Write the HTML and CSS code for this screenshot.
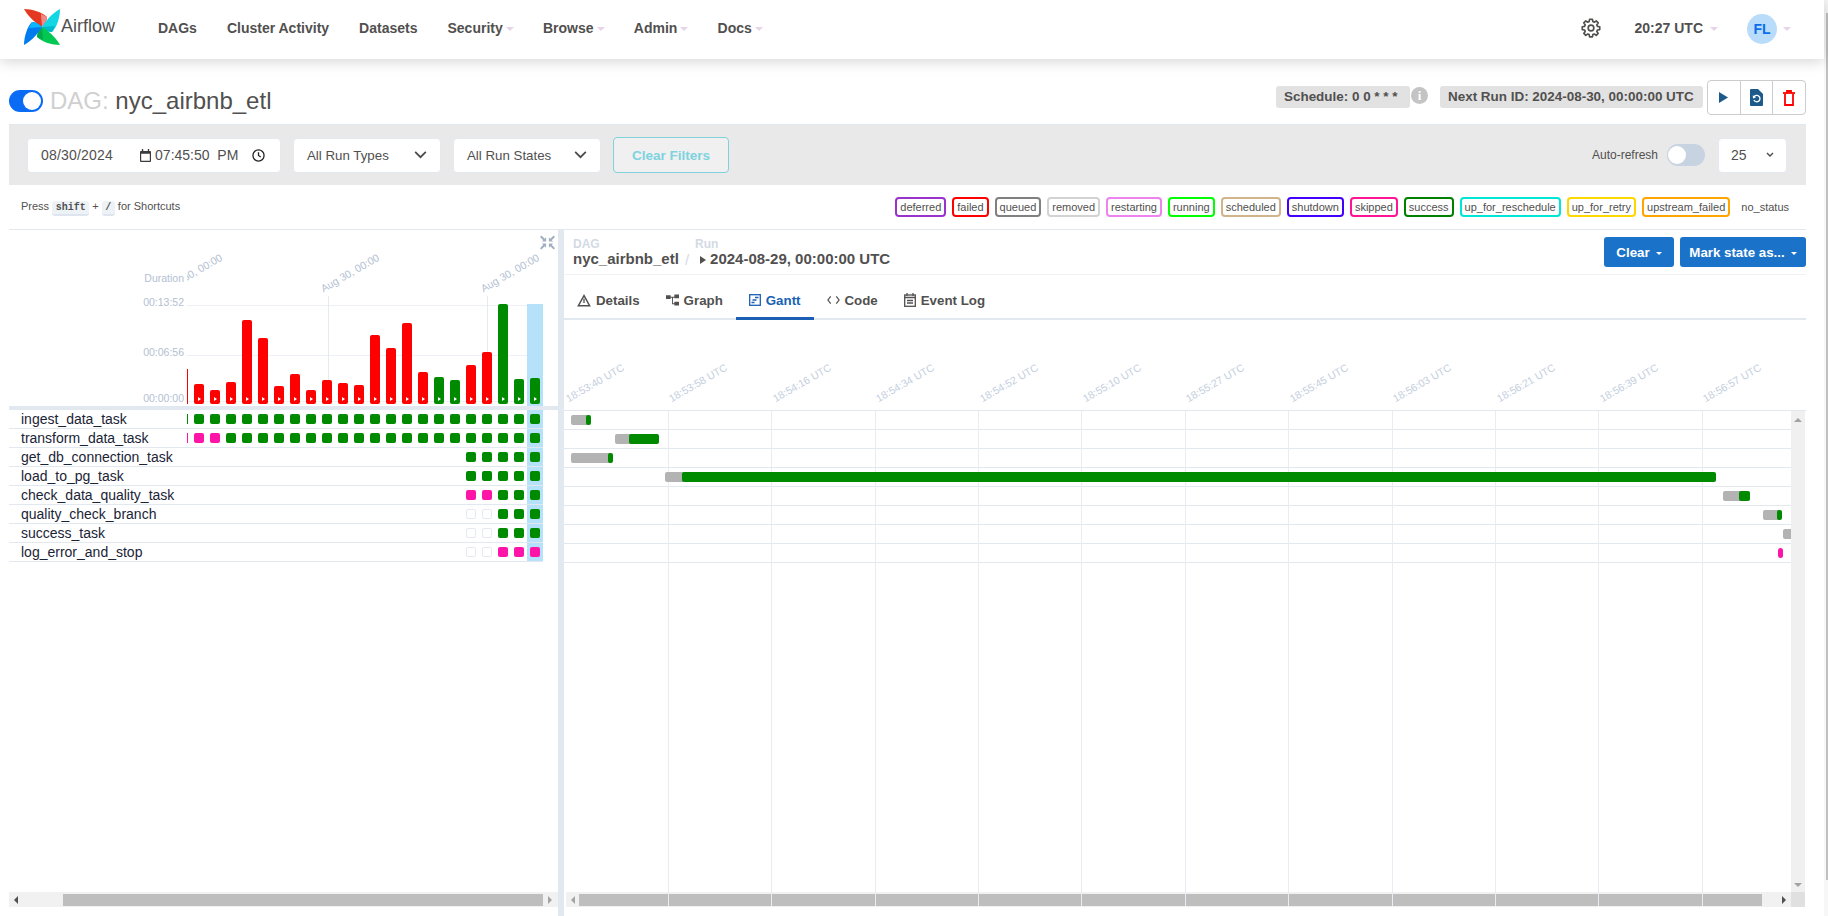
FILE: index.html
```html
<!DOCTYPE html>
<html lang="en">
<head>
    <meta charset="UTF-8">
    <meta name="viewport" content="width=device-width, initial-scale=1.0">
    <title>nyc_airbnb_etl - Gantt - Airflow</title>
    <link rel="stylesheet" href="styles.css">
</head>
<body>
    <nav class="navbar">
        <a class="brand">
            <svg class="pinwheel" viewBox="0 0 36 36" width="36" height="36">
                <g id="blades">
                    <path fill="#e43921" d="M0 0C8 0 18 3 23 8C23 12 21 15 18 18C13 15 5 9 0 0Z"/>
                    <path fill="#f0888a" d="M18 18C21 15 23 12 23 8L17 5C17 9 18 14 18 18Z"/>
                    <path fill="#11d7e4" d="M36 0C36 8 33 18 28 23C24 23 21 21 18 18C21 13 27 5 36 0Z"/>
                    <path fill="#00b8c9" d="M18 18C21 21 24 23 28 23L31 17C27 17 22 18 18 18Z"/>
                    <path fill="#00c853" d="M36 36C28 36 18 33 13 28C13 24 15 21 18 18C23 21 31 27 36 36Z"/>
                    <path fill="#00a94a" d="M18 18C15 21 13 24 13 28L19 31C19 27 18 22 18 18Z"/>
                    <path fill="#017cee" d="M0 36C0 28 3 18 8 13C12 13 15 15 18 18C15 23 9 31 0 36Z"/>
                    <path fill="#0cb6ff" d="M18 18C15 15 12 13 8 13L5 19C9 19 14 18 18 18Z"/>
                </g>
            </svg>
            <span class="brand-name">Airflow</span>
        </a>
        <ul class="nav-links">
            <li>DAGs</li>
            <li>Cluster Activity</li>
            <li>Datasets</li>
            <li class="dropdown">Security</li>
            <li class="dropdown">Browse</li>
            <li class="dropdown">Admin</li>
            <li class="dropdown">Docs</li>
        </ul>
        <div class="nav-right">
            <svg class="gear" viewBox="0 0 24 24" width="20" height="20" fill="none" stroke="#51504f" stroke-width="2" stroke-linejoin="round">
                <path d="M10.3 1.500h3.400l.5 2.800 1.700.8 2.400-1.600 2.300 2.400-1.600 2.300.7 1.800 2.800.5v3.400l-2.800.5-.7 1.700 1.600 2.400-2.300 2.300-2.400-1.600-1.700.7-.5 2.800h-3.400l-.5-2.800-1.700-.7-2.400 1.600-2.300-2.300 1.600-2.400-.7-1.700-2.800-.5v-3.400l2.800-.5.7-1.800-1.600-2.300 2.300-2.400 2.400 1.600 1.700-.8z"/>
                <circle cx="12" cy="12" r="3.400"/>
            </svg>
            <span class="clock dropdown">20:27 UTC</span>
            <span class="avatar">FL</span>
            <span class="caret-only"></span>
        </div>
    </nav>

    <main class="page">
        <section class="title-row">
            <h4 class="dag-title">
                <span class="paused-toggle"></span>
                <span><span class="dag-prefix">DAG:</span> nyc_airbnb_etl</span>
            </h4>
            <div class="title-meta">
                <span class="label-pill schedule">Schedule: 0 0 * * *</span>
                <span class="info-dot">i</span>
                <span class="label-pill next-run">Next Run ID: 2024-08-30, 00:00:00 UTC</span>
                <div class="action-group">
                    <button class="action-btn">
                        <svg viewBox="0 0 9 11" width="9" height="11"><path fill="#1d5a8c" d="M0 0l9 5.500-9 5.500z"/></svg>
                    </button>
                    <button class="action-btn">
                        <svg viewBox="0 0 13 17" width="13" height="17"><path fill="#1d5a8c" d="M1 0h7l5 5v11a1 1 0 0 1-1 1H1a1 1 0 0 1-1-1V1a1 1 0 0 1 1-1z"/><path fill="none" stroke="#fff" stroke-width="1.300" d="M4 8a3.200 3.200 0 1 1-.1 3"/><path fill="#fff" d="M2.800 6.200l.2 3.200 3-.9z"/></svg>
                    </button>
                    <button class="action-btn">
                        <svg viewBox="0 0 12 16" width="12" height="16" fill="none" stroke="#f00" stroke-width="1.800"><path d="M2 4v11h8V4"/><path d="M0 3h12"/><path d="M4 3V1h4v2"/></svg>
                    </button>
                </div>
            </div>
        </section>

        <section class="filter-bar">
            <div class="field date-field">
                <span class="date-value">08/30/2024</span>
                <svg class="cal" viewBox="0 0 12 14" width="11" height="13"><path fill="#3b3b3b" d="M2 0h1.500v2h5V0H10v2h1a1 1 0 0 1 1 1v10a1 1 0 0 1-1 1H1a1 1 0 0 1-1-1V3a1 1 0 0 1 1-1h1zM1.300 5v7.700h9.400V5z"/></svg>
                <span class="time-value">07:45:50&nbsp;&nbsp;PM</span>
                <svg viewBox="0 0 14 14" width="13" height="13" fill="none" stroke="#222" stroke-width="1.400"><circle cx="7" cy="7" r="6"/><path d="M7 3.400V7l2.400 1.600"/></svg>
            </div>
            <div class="field select-field">All Run Types
                <svg viewBox="0 0 14 9" width="13" height="8" fill="none" stroke="#4a4a4a" stroke-width="2"><path d="M1 1l6 6 6-6"/></svg>
            </div>
            <div class="field select-field">All Run States
                <svg viewBox="0 0 14 9" width="13" height="8" fill="none" stroke="#4a4a4a" stroke-width="2"><path d="M1 1l6 6 6-6"/></svg>
            </div>
            <button class="clear-filters">Clear Filters</button>
            <div class="auto-refresh">
                <span>Auto-refresh</span>
                <span class="refresh-toggle"></span>
                <div class="field page-size">25
                    <svg viewBox="0 0 8 6" width="8" height="6" fill="none" stroke="#4a4a4a" stroke-width="1.400"><path d="M1 1l3 3 3-3"/></svg>
                </div>
            </div>
        </section>

        <section class="legend-row">
            <p class="shortcuts">Press <kbd>shift</kbd> + <kbd>/</kbd> for Shortcuts</p>
            <div class="legend">
                <span class="chip deferred">deferred</span>
                <span class="chip failed">failed</span>
                <span class="chip queued">queued</span>
                <span class="chip removed">removed</span>
                <span class="chip restarting">restarting</span>
                <span class="chip running">running</span>
                <span class="chip scheduled">scheduled</span>
                <span class="chip shutdown">shutdown</span>
                <span class="chip skipped">skipped</span>
                <span class="chip success">success</span>
                <span class="chip reschedule">up_for_reschedule</span>
                <span class="chip retry">up_for_retry</span>
                <span class="chip upstream">upstream_failed</span>
                <span class="chip no-status">no_status</span>
            </div>
        </section>

        <section class="split">
            <div class="grid-pane">
                <div class="duration-chart">
                    <svg class="collapse-icon" viewBox="0 0 16 16" width="15" height="15" fill="#a0aec0"><path d="M0 2l1.500-1.500L5 4l1.500-1.500V7H2l1.500-1.500zM16 2l-1.500-1.500L11 4 9.500 2.500V7H14l-1.500-1.500zM0 14l1.500 1.500L5 12l1.500 1.500V9H2l1.500 1.500zM16 14l-1.500 1.500L11 12l-1.500 1.500V9H14l-1.500 1.500z"/></svg>
                    <span class="axis-name">Duration</span>
                    <span class="tick-label tick-top">00:13:52</span>
                    <span class="tick-label tick-mid">00:06:56</span>
                    <span class="tick-label tick-zero">00:00:00</span>
                    <div class="date-clip">
                        <span class="date-label date-a">Aug 30, 00:00</span>
                        <span class="date-label date-b">Aug 30, 00:00</span>
                        <span class="date-label date-c">Aug 30, 00:00</span>
                    </div>
                    <div class="plot">
                        <i class="gridline line-top"></i>
                        <i class="gridline line-mid"></i>
                        <i class="gridline line-zero"></i>
                        <i class="date-tick tick-b"></i>
                        <i class="date-tick tick-c"></i>
                        <i class="run-column"></i>
                        <div class="bars">
                            <b class="sliver red" style="height:35px"></b>
                            <b class="bar red" style="height:20px"></b>
                            <b class="bar red" style="height:14px"></b>
                            <b class="bar red" style="height:22px"></b>
                            <b class="bar red" style="height:84px"></b>
                            <b class="bar red" style="height:66px"></b>
                            <b class="bar red" style="height:18px"></b>
                            <b class="bar red" style="height:30px"></b>
                            <b class="bar red" style="height:14px"></b>
                            <b class="bar red" style="height:24px"></b>
                            <b class="bar red" style="height:21px"></b>
                            <b class="bar red" style="height:19px"></b>
                            <b class="bar red" style="height:69px"></b>
                            <b class="bar red" style="height:56px"></b>
                            <b class="bar red" style="height:81px"></b>
                            <b class="bar red" style="height:32px"></b>
                            <b class="bar green" style="height:27px"></b>
                            <b class="bar green" style="height:24px"></b>
                            <b class="bar red" style="height:39px"></b>
                            <b class="bar red" style="height:52px"></b>
                            <b class="bar green" style="height:100px"></b>
                            <b class="bar green" style="height:25px"></b>
                            <b class="bar green" style="height:26px"></b>
                        </div>
                    </div>
                </div>
                <div class="task-table">
                    <i class="run-column-rows"></i>
                    <div class="task-row"><span class="task-name">ingest_data_task</span>
                        <div class="squares"><b class="sliver green"></b><i class="sq ok"></i><i class="sq ok"></i><i class="sq ok"></i><i class="sq ok"></i><i class="sq ok"></i><i class="sq ok"></i><i class="sq ok"></i><i class="sq ok"></i><i class="sq ok"></i><i class="sq ok"></i><i class="sq ok"></i><i class="sq ok"></i><i class="sq ok"></i><i class="sq ok"></i><i class="sq ok"></i><i class="sq ok"></i><i class="sq ok"></i><i class="sq ok"></i><i class="sq ok"></i><i class="sq ok"></i><i class="sq ok"></i><i class="sq ok"></i></div></div>
                    <div class="task-row"><span class="task-name">transform_data_task</span>
                        <div class="squares"><b class="sliver pink"></b><i class="sq skip"></i><i class="sq skip"></i><i class="sq ok"></i><i class="sq ok"></i><i class="sq ok"></i><i class="sq ok"></i><i class="sq ok"></i><i class="sq ok"></i><i class="sq ok"></i><i class="sq ok"></i><i class="sq ok"></i><i class="sq ok"></i><i class="sq ok"></i><i class="sq ok"></i><i class="sq ok"></i><i class="sq ok"></i><i class="sq ok"></i><i class="sq ok"></i><i class="sq ok"></i><i class="sq ok"></i><i class="sq ok"></i><i class="sq ok"></i></div></div>
                    <div class="task-row"><span class="task-name">get_db_connection_task</span>
                        <div class="squares"><i class="sq ok"></i><i class="sq ok"></i><i class="sq ok"></i><i class="sq ok"></i><i class="sq ok"></i></div></div>
                    <div class="task-row"><span class="task-name">load_to_pg_task</span>
                        <div class="squares"><i class="sq ok"></i><i class="sq ok"></i><i class="sq ok"></i><i class="sq ok"></i><i class="sq ok"></i></div></div>
                    <div class="task-row"><span class="task-name">check_data_quality_task</span>
                        <div class="squares"><i class="sq skip"></i><i class="sq skip"></i><i class="sq ok"></i><i class="sq ok"></i><i class="sq ok"></i></div></div>
                    <div class="task-row"><span class="task-name">quality_check_branch</span>
                        <div class="squares"><i class="sq none"></i><i class="sq none"></i><i class="sq ok"></i><i class="sq ok"></i><i class="sq ok"></i></div></div>
                    <div class="task-row"><span class="task-name">success_task</span>
                        <div class="squares"><i class="sq none"></i><i class="sq none"></i><i class="sq ok"></i><i class="sq ok"></i><i class="sq ok"></i></div></div>
                    <div class="task-row"><span class="task-name">log_error_and_stop</span>
                        <div class="squares"><i class="sq none"></i><i class="sq none"></i><i class="sq skip"></i><i class="sq skip"></i><i class="sq skip"></i></div></div>
                </div>
                <div class="hscroll left-scroll">
                    <span class="arrow-left"></span>
                    <span class="thumb"></span>
                    <span class="arrow-right faded"></span>
                </div>
            </div>

            <div class="divider"></div>

            <div class="detail-pane">
                <div class="crumb-row">
                    <div class="crumbs">
                        <div class="crumb">
                            <small>DAG</small>
                            <strong>nyc_airbnb_etl</strong>
                        </div>
                        <span class="crumb-sep">/</span>
                        <div class="crumb">
                            <small>Run</small>
                            <strong class="run-date"><span class="run-play"></span>2024-08-29, 00:00:00 UTC</strong>
                        </div>
                    </div>
                    <div class="crumb-actions">
                        <button class="primary-btn clear-btn">Clear</button>
                        <button class="primary-btn mark-btn">Mark state as...</button>
                    </div>
                </div>
                <div class="tabs">
                    <span class="tab">
                        <svg viewBox="0 0 16 15" width="14" height="13" fill="none" stroke="#51504f" stroke-width="1.700"><path d="M8 1.800L1.500 13.500h13z"/><path d="M8 5.500v5" stroke-width="1.500"/></svg>Details
                    </span>
                    <span class="tab">
                        <svg viewBox="0 0 14 12" width="13" height="12" fill="#51504f"><path d="M0 1h5v4H0zM9 0h5v4H9zM9 8h5v4H9zM5 2.500h4v1H7.500v6H9v1H6.500v-7H5z"/></svg>Graph
                    </span>
                    <span class="tab active">
                        <svg viewBox="0 0 12 12" width="12" height="12" fill="none" stroke="#1a5fb4" stroke-width="1.300"><rect x=".7" y=".7" width="10.600" height="10.600"/><path d="M6 3.500h3.500M3.500 6h4M2.500 8.500h3"/></svg>Gantt
                    </span>
                    <span class="tab">
                        <svg viewBox="0 0 14 10" width="13" height="10" fill="none" stroke="#51504f" stroke-width="1.300"><path d="M4 1L1 5l3 4M10 1l3 4-3 4"/></svg>Code
                    </span>
                    <span class="tab">
                        <svg viewBox="0 0 12 14" width="12" height="14" fill="none" stroke="#51504f" stroke-width="1.300"><rect x=".7" y="2" width="10.600" height="11.300"/><path d="M3 0v3M9 0v3M.7 4.500h10.600M3 7.500h6M3 10h6"/></svg>Event Log
                    </span>
                </div>
                <div class="gantt">
                    <div class="gantt-head">
                        <span class="time-label">18:53:40 UTC</span>
                        <span class="time-label">18:53:58 UTC</span>
                        <span class="time-label">18:54:16 UTC</span>
                        <span class="time-label">18:54:34 UTC</span>
                        <span class="time-label">18:54:52 UTC</span>
                        <span class="time-label">18:55:10 UTC</span>
                        <span class="time-label">18:55:27 UTC</span>
                        <span class="time-label">18:55:45 UTC</span>
                        <span class="time-label">18:56:03 UTC</span>
                        <span class="time-label">18:56:21 UTC</span>
                        <span class="time-label">18:56:39 UTC</span>
                        <span class="time-label">18:56:57 UTC</span>
                    </div>
                    <div class="gantt-body">
                        <div class="gantt-canvas">
                            <div class="gantt-row"><i class="seg queue" style="left:7px;width:18px"></i><i class="seg run" style="left:22px;width:5px"></i></div>
                            <div class="gantt-row"><i class="seg queue" style="left:51px;width:17px"></i><i class="seg run" style="left:65px;width:30px"></i></div>
                            <div class="gantt-row"><i class="seg queue" style="left:7px;width:40px"></i><i class="seg run" style="left:44px;width:5px"></i></div>
                            <div class="gantt-row"><i class="seg queue" style="left:101px;width:20px"></i><i class="seg run" style="left:118px;width:1034px"></i></div>
                            <div class="gantt-row"><i class="seg queue" style="left:1159px;width:19px"></i><i class="seg run" style="left:1175px;width:11px"></i></div>
                            <div class="gantt-row"><i class="seg queue" style="left:1199px;width:17px"></i><i class="seg run" style="left:1213px;width:5px"></i></div>
                            <div class="gantt-row"><i class="seg queue" style="left:1219px;width:12px"></i></div>
                            <div class="gantt-row"><i class="seg skipped-seg" style="left:1214px;width:5px"></i></div>
                        </div>
                        <div class="vscroll">
                            <span class="arrow-up"></span>
                            <span class="arrow-down"></span>
                        </div>
                        <div class="gantt-lines">
                            <i></i><i></i><i></i><i></i><i></i><i></i><i></i><i></i><i></i><i></i><i></i>
                        </div>
                    </div>
                    <div class="hscroll right-scroll">
                        <span class="arrow-left faded"></span>
                        <span class="thumb"></span>
                        <span class="arrow-right"></span>
                        <span class="corner"></span>
                    </div>
                </div>
            </div>
        </section>
    </main>
    <div class="page-scrollbar"></div>
</body>
</html>
```
FILE: styles.css
```css
* {
    box-sizing: border-box;
}
html, body {
    height: 916px;
    margin: 0;
    overflow: hidden;
}
body {
    font-family: "Liberation Sans", Arial, sans-serif;
    font-size: 14px;
    color: #51504f;
    background-color: white;
}
i, b {
    display: block;
    font-style: normal;
}
button {
    font-family: inherit;
}

/* navbar */
.navbar {
    display: flex;
    align-items: center;
    height: 59px;
    width: 1824px;
    padding: 0 0 4px 24px;
    background-color: white;
    box-shadow: 0 2px 14px rgba(0,0,0,0.18);
    position: relative;
    z-index: 2;
}
.brand {
    display: flex;
    align-items: center;
    width: 134px;
}
.pinwheel {
    margin-top: -1px;
}
.brand-name {
    font-size: 18px;
    margin: -3px 0 0 1px;
    color: #51504f;
}
.nav-links {
    display: flex;
    gap: 30px;
    list-style: none;
    margin: 0;
    padding: 0;
    font-weight: bold;
}
.dropdown::after {
    content: "";
    display: inline-block;
    margin-left: 3px;
    vertical-align: 2px;
    border-top: 4px solid #e8d4e8;
    border-left: 4px solid transparent;
    border-right: 4px solid transparent;
}
.nav-links .dropdown {
    margin-right: -0.75px;
}
.nav-right {
    display: flex;
    align-items: center;
    margin-left: auto;
    font-weight: bold;
}
.gear {
    margin-right: 34px;
}
.clock {
    margin-right: 29px;
}
.clock::after {
    margin-left: 7px;
}
.avatar {
    width: 30px;
    height: 30px;
    margin-top: 3px;
    border-radius: 50%;
    background-color: #b9dcfb;
    color: #0a6fe8;
    display: flex;
    align-items: center;
    justify-content: center;
}
.caret-only {
    margin: 3px 33px 0 6px;
    border-top: 4px solid #e8d4e8;
    border-left: 4px solid transparent;
    border-right: 4px solid transparent;
}

/* page */
.page {
    width: 1797px;
    margin-left: 9px;
    height: 857px;
    display: flex;
    flex-direction: column;
}
.title-row {
    display: flex;
    justify-content: space-between;
    align-items: flex-start;
    height: 65px;
    padding-top: 21px;
}
.dag-title {
    margin: 0;
    display: flex;
    align-items: center;
    gap: 7px;
    font-size: 24px;
    font-weight: normal;
    height: 42px;
}
.paused-toggle {
    width: 34px;
    height: 22px;
    border-radius: 11px;
    background-color: #0a6cf5;
    position: relative;
}
.paused-toggle::after {
    content: "";
    position: absolute;
    right: 2px;
    top: 2px;
    width: 18px;
    height: 18px;
    border-radius: 50%;
    background-color: white;
}
.dag-prefix {
    color: #d0d0d0;
}
.title-meta {
    display: flex;
    align-items: flex-start;
}
.label-pill {
    font-size: 13.44px;
    font-weight: bold;
    background-color: #e2e2e2;
    border-radius: 3px;
    height: 22px;
    line-height: 22px;
    padding: 0 8px;
    margin-top: 6px;
    white-space: nowrap;
}
.schedule {
    width: 134px;
}
.info-dot {
    width: 17px;
    height: 17px;
    margin: 7px 12px 0 1px;
    border-radius: 50%;
    background-color: #c4c4c4;
    color: white;
    font-weight: bold;
    font-size: 13px;
    line-height: 17px;
    text-align: center;
    font-family: "Liberation Serif", serif;
}
.next-run {
    width: 263px;
}
.action-group {
    display: flex;
    width: 99px;
    height: 35px;
    margin-left: 4px;
    border: 1px solid #ccc;
    border-radius: 4px;
}
.action-btn {
    flex: 1;
    background: none;
    border: none;
    border-right: 1px solid #ccc;
    padding: 0;
    display: flex;
    align-items: center;
    justify-content: center;
}
.action-btn:last-child {
    border-right: none;
}

/* filters */
.filter-bar {
    display: flex;
    align-items: center;
    height: 61px;
    padding: 0 19px 0 18px;
    background-color: #e9e9e9;
    border-top: 1px solid #e2e8f0;
    gap: 12px;
}
.field {
    display: flex;
    align-items: center;
    justify-content: space-between;
    height: 35px;
    background-color: white;
    border-radius: 4px;
    border: 1px solid #e4e8f0;
    font-size: 13.3px;
    padding: 0 13px;
}
.date-field {
    width: 254px;
    justify-content: flex-start;
    font-size: 14px;
}
.date-value {
    letter-spacing: 0.2px;
}
.cal {
    margin-left: 27px;
}
.time-value {
    margin: 0 14px 0 4px;
    white-space: nowrap;
}
.select-field {
    width: 148px;
}
.clear-filters {
    width: 116px;
    height: 36px;
    background-color: #f0f0f0;
    border: 1px solid #7fd2dc;
    border-radius: 4px;
    color: #7dd3df;
    font-weight: bold;
    font-size: 13.5px;
}
.auto-refresh {
    display: flex;
    align-items: center;
    margin-left: auto;
    font-size: 12px;
}
.refresh-toggle {
    width: 38px;
    height: 22px;
    border-radius: 11px;
    margin: 0 13px 0 9px;
    background-color: #c8d3e2;
    position: relative;
}
.refresh-toggle::after {
    content: "";
    position: absolute;
    left: 1px;
    top: 2px;
    width: 18px;
    height: 18px;
    border-radius: 50%;
    background-color: white;
}
.page-size {
    width: 69px;
    padding: 0 12px;
    font-size: 14px;
}

/* legend */
.legend-row {
    display: flex;
    justify-content: space-between;
    align-items: center;
    height: 45px;
    border-bottom: 1px solid #e2e8f0;
    padding: 0 12px 1px 12px;
}
.shortcuts {
    margin: 0;
    font-size: 11px;
}
kbd {
    font-family: "Liberation Mono", monospace;
    font-weight: bold;
    font-size: 10px;
    padding: 1px 3.5px;
    border-radius: 3px;
    background-color: #edf2f7;
    box-shadow: 0 2px 0 #dfe5ef;
}
.legend {
    display: flex;
    align-items: center;
    gap: 6px;
    font-size: 11px;
}
.chip {
    height: 20px;
    line-height: 16px;
    padding: 0 3px;
    border: 2px solid;
    border-radius: 4px;
}
.deferred { border-color: #9933cc; }
.failed { border-color: #ff0000; }
.queued { border-color: #808080; }
.removed { border-color: #d3d3d3; }
.restarting { border-color: #ee82ee; }
.running { border-color: #00ff00; }
.scheduled { border-color: #d2b48c; }
.shutdown { border-color: #4400ff; }
.skipped { border-color: #ff1493; }
.success { border-color: #008000; }
.reschedule { border-color: #00e6d6; }
.retry { border-color: #ffd700; }
.upstream { border-color: #ffa500; }
.no-status { border-color: transparent; }

/* split */
.split {
    display: flex;
    flex: 1;
    min-height: 0;
}
.grid-pane {
    width: 549px;
    display: flex;
    flex-direction: column;
}
.divider {
    width: 6px;
    background-color: #e2e8f0;
}
.detail-pane {
    flex: 1;
    min-width: 0;
    display: flex;
    flex-direction: column;
}

/* duration chart: axis labels sit on a free canvas */
.duration-chart {
    height: 180px;
    position: relative;
    flex-shrink: 0;
    border-bottom: 4px solid #e2e8f0;
}
.collapse-icon {
    position: absolute;
    left: 531px;
    top: 5px;
}
.axis-name, .tick-label {
    position: absolute;
    right: 374px;
    font-size: 10.5px;
    color: #b4c0d2;
    line-height: 13px;
    white-space: nowrap;
}
.axis-name { top: 42px; }
.tick-top { top: 66px; }
.tick-mid { top: 116px; }
.tick-zero { top: 162px; }
.date-clip {
    position: absolute;
    left: 178px;
    top: 0;
    width: 370px;
    height: 70px;
    overflow: hidden;
}
.date-label {
    position: absolute;
    font-size: 10.5px;
    line-height: 13px;
    color: #b4c0d2;
    white-space: nowrap;
    transform-origin: 0 100%;
    transform: rotate(-30deg);
}
.date-a { left: -19px; top: 52px; }
.date-b { left: 138px; top: 52px; }
.date-c { left: 298px; top: 52px; }
.plot {
    position: absolute;
    left: 178px;
    top: 75px;
    width: 356px;
    height: 100px;
}
.gridline {
    position: absolute;
    left: 0;
    right: 0;
    height: 1px;
    background-color: #edf1f6;
}
.line-top { top: 0; }
.line-mid { top: 50px; }
.line-zero { top: 96px; }
.date-tick {
    position: absolute;
    top: -9px;
    bottom: 3px;
    width: 1px;
    background-color: #e6eaf0;
}
.tick-b { left: 141px; }
.tick-c { left: 300px; }
.run-column {
    position: absolute;
    left: 340px;
    width: 16px;
    top: -1px;
    bottom: -1px;
    background-color: #b5e2f9;
}
.bars {
    position: absolute;
    left: 0;
    right: 0;
    bottom: 1px;
    display: flex;
    align-items: flex-end;
    height: 100px;
}
.bar {
    flex: none;
    width: 10px;
    margin-right: 6px;
    border-radius: 2px;
    position: relative;
}
.bar::after {
    content: "";
    position: absolute;
    left: 4px;
    bottom: 3px;
    border-left: 3px solid white;
    border-top: 2px solid transparent;
    border-bottom: 2px solid transparent;
}
.sliver {
    flex: none;
    width: 1px;
    margin-right: 6px;
}
.red { background-color: #ff0000; }
.green { background-color: #008a00; }
.pink { background-color: #ff14a8; }

/* task rows */
.task-table {
    position: relative;
    flex: 1;
}
.run-column-rows {
    position: absolute;
    left: 518px;
    top: 0;
    width: 16px;
    height: 152px;
    background-color: #b5e2f9;
}
.task-row {
    position: relative;
    height: 19px;
    width: 534px;
    border-bottom: 1px solid #e2e8f0;
    display: flex;
    align-items: center;
    justify-content: space-between;
}
.task-name {
    padding-left: 12px;
    color: #1a2436;
    line-height: 18px;
}
.squares {
    display: flex;
    align-items: center;
    gap: 6px;
    padding-right: 3px;
}
.squares .sliver {
    height: 10px;
    margin-right: 0;
}
.sq {
    width: 10px;
    height: 10px;
    border-radius: 2px;
}
.ok { background-color: #008a00; }
.skip { background-color: #ff14a8; }
.none { background-color: white; border: 1px solid #e5e9f0; }

/* scrollbars */
.hscroll {
    display: flex;
    align-items: center;
    flex-shrink: 0;
    background-color: #f1f1f1;
    height: 15px;
}
.left-scroll {
    margin-bottom: 9px;
    padding-left: 5px;
}
.left-scroll .thumb {
    margin: 0 5px 0 45px;
    width: 480px;
}
.thumb {
    height: 12px;
    background-color: #bebebe;
}
.arrow-left, .arrow-right {
    width: 0;
    border-top: 4px solid transparent;
    border-bottom: 4px solid transparent;
}
.arrow-left { border-right: 4px solid #505050; }
.arrow-right { border-left: 4px solid #505050; }
.arrow-left.faded { border-right-color: #a3a3a3; }
.arrow-right.faded { border-left-color: #a3a3a3; }
.arrow-up, .arrow-down {
    width: 0;
    border-left: 4px solid transparent;
    border-right: 4px solid transparent;
}
.arrow-up { border-bottom: 4px solid #a3a3a3; }
.arrow-down { border-top: 4px solid #a3a3a3; }

/* crumbs and tabs */
.crumb-row {
    display: flex;
    justify-content: space-between;
    height: 45px;
    flex-shrink: 0;
    border-bottom: 1px solid #f0f2f5;
    padding-left: 9px;
}
.crumbs {
    display: flex;
    align-items: flex-start;
    padding-top: 7px;
}
.crumb {
    display: flex;
    flex-direction: column;
}
.crumb small {
    font-size: 12px;
    font-weight: bold;
    color: #d3dae5;
    line-height: 14px;
}
.crumb strong {
    display: flex;
    align-items: center;
    font-size: 15px;
    line-height: 16px;
}
.run-date {
    padding-left: 5px;
}
.crumb-sep {
    color: #d3dae5;
    font-size: 15px;
    margin: 14px 6px 0 6px;
}
.run-play {
    border-left: 6px solid #51504f;
    border-top: 4px solid transparent;
    border-bottom: 4px solid transparent;
    margin: 1px 4px 0 0;
}
.crumb-actions {
    display: flex;
    gap: 6px;
    padding-top: 7px;
}
.primary-btn {
    height: 30px;
    padding: 0;
    background-color: #1a73c8;
    border: none;
    border-radius: 3px;
    color: white;
    font-weight: bold;
    font-size: 13.3px;
}
.clear-btn {
    width: 70px;
}
.mark-btn {
    width: 126px;
}
.primary-btn::after {
    content: "";
    display: inline-block;
    margin-left: 6px;
    vertical-align: 2px;
    border-top: 3px solid white;
    border-left: 3px solid transparent;
    border-right: 3px solid transparent;
}
.tabs {
    display: flex;
    height: 45px;
    flex-shrink: 0;
    border-bottom: 2px solid #e2e8f0;
}
.tab {
    display: flex;
    align-items: center;
    gap: 5px;
    padding: 5px 13px 0;
    font-weight: bold;
    font-size: 13.3px;
    height: 45px;
}
.tab.active {
    color: #1a5fb4;
    border-bottom: 3px solid #1a5fb4;
    padding-top: 8px;
}

/* gantt */
.gantt {
    flex: 1;
    min-height: 0;
    display: flex;
    flex-direction: column;
}
.gantt-head {
    display: flex;
    height: 90px;
    flex-shrink: 0;
    padding-left: 6px;
}
.time-label {
    width: 103.4px;
    flex-shrink: 0;
    font-size: 10.5px;
    line-height: 13px;
    color: #c3cede;
    white-space: nowrap;
    align-self: flex-end;
    transform-origin: 0 100%;
    transform: rotate(-30deg);
    margin-bottom: 5px;
}
.gantt-body {
    flex: 1;
    min-height: 0;
    display: flex;
    position: relative;
    border-top: 1px solid #e2e8f0;
}
.gantt-canvas {
    width: 1227px;
    flex-shrink: 0;
    overflow: hidden;
}
.gantt-row {
    height: 19px;
    position: relative;
    border-bottom: 1px solid #e2e8f0;
}
.seg {
    position: absolute;
    top: 4px;
    height: 10px;
    border-radius: 2px;
    z-index: 1;
}
.queue { background-color: #b3b3b3; }
.run { background-color: #008a00; }
.skipped-seg { background-color: #ff14a8; border-radius: 3px; }
.gantt-lines {
    position: absolute;
    left: 1.4px;
    top: 0;
    bottom: -14px;
    width: 1227px;
    display: flex;
    pointer-events: none;
}
.gantt-lines i {
    width: 103.4px;
    flex-shrink: 0;
    border-right: 1px solid #e9edf3;
}
.vscroll {
    width: 14px;
    background-color: #f0f0f1;
    display: flex;
    flex-direction: column;
    align-items: center;
    justify-content: space-between;
    padding: 7px 0 5px;
}
.right-scroll {
    margin: 0 0 9px 2px;
    width: 1239px;
    padding-left: 5px;
}
.right-scroll .thumb {
    width: 1183px;
    margin: 0 20px 0 4px;
}
.corner {
    margin-left: 5px;
    width: 14px;
    height: 15px;
    background-color: #e0e0e0;
}
.page-scrollbar {
    position: absolute;
    right: 0;
    top: 0;
    width: 4px;
    height: 916px;
    background-color: #f7f7f7;
}
.page-scrollbar::after {
    content: "";
    position: absolute;
    right: 0;
    top: 13px;
    width: 2px;
    height: 867px;
    background-color: #c0c0c0;
}
```
